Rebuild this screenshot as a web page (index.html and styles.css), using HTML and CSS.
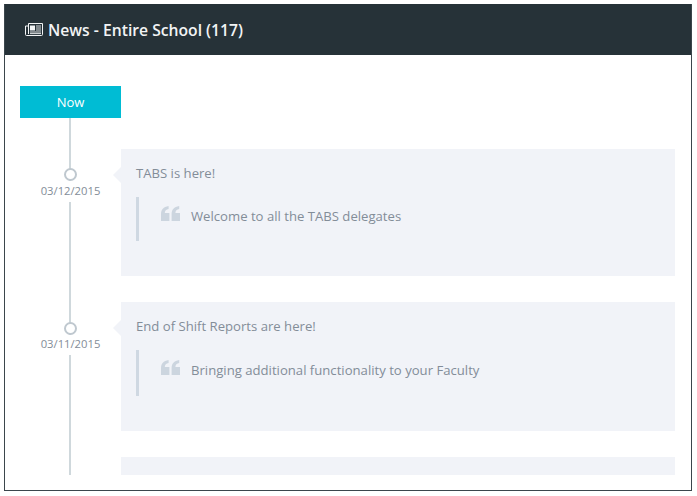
FILE: index.html
```html
<!DOCTYPE html>
<html lang="en">
<head>
    <meta charset="UTF-8">
    <meta name="viewport" content="width=device-width, initial-scale=1.0">
    <title>News - Entire School</title>
    <link rel="stylesheet" href="styles.css">
</head>
<body>
    <div class="panel">
        <div class="panel-head">
            <svg class="news-icon" viewBox="0 0 18 13" width="18" height="13">
                <path d="M3.5 .5h14v11a1 1 0 0 1-1 1H1.500a1 1 0 0 1-1-1V3h3z" fill="none" stroke="currentColor"/>
                <path d="M3.500 3v8" fill="none" stroke="currentColor"/>
                <rect x="5" y="2.500" width="5" height="5" fill="currentColor"/>
                <path d="M11 3h5M11 5h5M11 7h5M5 9h11M5 10.600h11" fill="none" stroke="currentColor" stroke-width=".9"/>
            </svg>
            <span>News - Entire School (117)</span>
        </div>
        <div class="panel-body">
            <div class="now">Now</div>
            <div class="timeline">
                <div class="entry">
                    <div class="marker">
                        <span class="dot"></span>
                        <span class="date">03/12/2015</span>
                    </div>
                    <div class="card">
                        <div class="card-title">TABS is here!</div>
                        <div class="quote">
                            <svg class="quote-mark" viewBox="0 0 19 15" width="19" height="15">
                                <path d="M0 15V8.200C0 3.600 2.400.8 7.600 0v3C5.200 3.500 3.800 4.800 3.800 7h4.600v8zM10.600 15V8.200C10.600 3.600 13 .8 18.200 0v3c-2.400.5-3.800 1.800-3.800 4H19v8z" fill="currentColor"/>
                            </svg>
                            <span>Welcome to all the TABS delegates</span>
                        </div>
                    </div>
                </div>
                <div class="entry entry-tall">
                    <div class="marker">
                        <span class="dot"></span>
                        <span class="date">03/11/2015</span>
                    </div>
                    <div class="card">
                        <div class="card-title">End of Shift Reports are here!</div>
                        <div class="quote">
                            <svg class="quote-mark" viewBox="0 0 19 15" width="19" height="15">
                                <path d="M0 15V8.200C0 3.600 2.400.8 7.600 0v3C5.200 3.500 3.800 4.800 3.800 7h4.600v8zM10.600 15V8.200C10.600 3.600 13 .8 18.200 0v3c-2.400.5-3.800 1.800-3.800 4H19v8z" fill="currentColor"/>
                            </svg>
                            <span>Bringing additional functionality to your Faculty</span>
                        </div>
                    </div>
                </div>
                <div class="entry">
                    <div class="marker"></div>
                    <div class="card"></div>
                </div>
            </div>
        </div>
    </div>
</body>
</html>
```

FILE: styles.css
```css
body {
    margin: 0;
    background-color: #ffffff;
    font-family: "Open Sans", sans-serif;
    color: #838d98;
}

.panel {
    box-sizing: border-box;
    width: 688px;
    height: 487px;
    margin: 4px 0 0 4px;
    border: 1px solid #3b464c;
    border-top: 0;
    overflow: hidden;
}

.panel-head {
    display: flex;
    align-items: center;
    gap: 5px;
    height: 51px;
    margin: 0 -1px;
    padding-left: 21px;
    background-color: #263238;
    color: #f2f4f5;
    font-size: 15.7px;
    font-weight: 600;
}

.news-icon {
    flex: none;
}

.panel-body {
    padding: 31px 16px 0 15px;
}

.now {
    width: 101px;
    height: 32px;
    background-color: #00bcd4;
    color: #ffffff;
    font-size: 13px;
    line-height: 33px;
    text-align: center;
}

.timeline {
    position: relative;
    height: 357px;
    padding-top: 31px;
    box-sizing: border-box;
    overflow: hidden;
}

/* vertical line behind the dots */
.timeline::before {
    content: "";
    position: absolute;
    top: 0;
    bottom: 0;
    left: 49px;
    width: 2px;
    background-color: #cfd8dc;
}

.entry {
    display: flex;
    margin-bottom: 26px;
}

.marker {
    position: relative;
    display: flex;
    flex-direction: column;
    align-items: center;
    flex: none;
    width: 101px;
    padding-top: 19px;
}

.entry-tall .marker {
    padding-top: 20px;
}

.entry-tall .date {
    padding-top: 1px;
}

.dot {
    box-sizing: border-box;
    width: 13px;
    height: 13px;
    border: 2px solid #bfc8cf;
    border-radius: 50%;
    background-color: #ffffff;
}

.date {
    padding: 2px 0 3px 0;
    background-color: #ffffff;
    font-size: 11.25px;
    line-height: 16px;
}

.card {
    position: relative;
    flex: 1;
    box-sizing: border-box;
    min-height: 127px;
    padding: 15px;
    background-color: #f1f3f8;
}

.entry-tall .card {
    min-height: 129px;
}

.entry-tall .quote {
    min-height: 46px;
    padding-top: 10px;
}

/* little arrow pointing at the dot */
.card::before {
    content: "";
    position: absolute;
    top: 18px;
    left: -8px;
    border-style: solid;
    border-width: 8px 8px 8px 0;
    border-color: transparent #f1f3f8 transparent transparent;
}

.card:empty::before {
    display: none;
}

.card-title {
    font-size: 13.13px;
    line-height: 18px;
}

.quote {
    display: flex;
    align-items: flex-start;
    gap: 11px;
    box-sizing: border-box;
    min-height: 44px;
    margin-top: 15px;
    padding: 9px 0 0 22px;
    border-left: 3px solid #cfd8e2;
    font-size: 13.13px;
    line-height: 20px;
}

.quote-mark {
    flex: none;
    color: #ccd5df;
}
```
